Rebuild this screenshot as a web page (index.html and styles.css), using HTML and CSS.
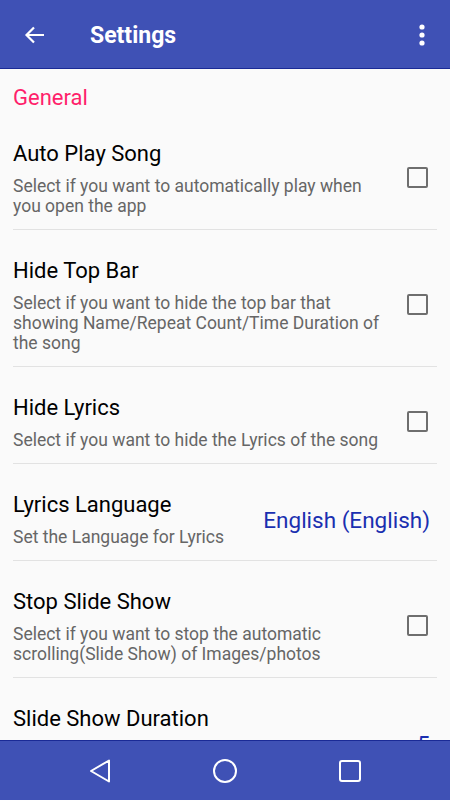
FILE: index.html
```html
<!DOCTYPE html>
<html>
  <head>
    <meta charset="UTF-8">
    <title>Settings</title>
    <link rel="stylesheet" href="styles.css">
  </head>
  <body>
    <header class="toolbar">
      <svg class="toolbar-back" width="24" height="24" viewBox="0 0 24 24">
        <path d="M21 12H4M11 4.5L3.5 12L11 19.5" fill="none" stroke="#fff" stroke-width="2.2"/>
      </svg>
      <h1 class="toolbar-title">Settings</h1>
      <svg class="toolbar-more" width="8" height="24" viewBox="0 0 8 24">
        <circle cx="4" cy="4" r="2.6" fill="#fff"/>
        <circle cx="4" cy="12" r="2.6" fill="#fff"/>
        <circle cx="4" cy="20" r="2.6" fill="#fff"/>
      </svg>
    </header>

    <main class="prefs">
      <div class="category">General</div>

      <div class="pref">
        <div class="pref-text">
          <div class="pref-title">Auto Play Song</div>
          <div class="pref-summary">Select if you want to automatically play when you open the app</div>
        </div>
        <div class="pref-widget"><span class="checkbox"></span></div>
      </div>

      <div class="pref">
        <div class="pref-text">
          <div class="pref-title">Hide Top Bar</div>
          <div class="pref-summary">Select if you want to hide the top bar that showing Name/Repeat Count/Time Duration of the song</div>
        </div>
        <div class="pref-widget"><span class="checkbox"></span></div>
      </div>

      <div class="pref">
        <div class="pref-text">
          <div class="pref-title">Hide Lyrics</div>
          <div class="pref-summary">Select if you want to hide the Lyrics of the song</div>
        </div>
        <div class="pref-widget"><span class="checkbox"></span></div>
      </div>

      <div class="pref">
        <div class="pref-text">
          <div class="pref-title">Lyrics Language</div>
          <div class="pref-summary">Set the Language for Lyrics</div>
        </div>
        <div class="pref-value">English (English)</div>
      </div>

      <div class="pref">
        <div class="pref-text">
          <div class="pref-title">Stop Slide Show</div>
          <div class="pref-summary">Select if you want to stop the automatic scrolling(Slide Show) of Images/photos</div>
        </div>
        <div class="pref-widget"><span class="checkbox"></span></div>
      </div>

      <div class="pref">
        <div class="pref-text">
          <div class="pref-title">Slide Show Duration</div>
          <div class="pref-summary">Set the time (in seconds) each image is shown before moving to the next one</div>
        </div>
        <div class="pref-value">5</div>
      </div>
    </main>

    <nav class="navbar">
      <svg width="24" height="26" viewBox="0 0 24 26">
        <path d="M21 2.5V23.5L3 13Z" fill="none" stroke="#fff" stroke-width="2" stroke-linejoin="round"/>
      </svg>
      <svg width="26" height="26" viewBox="0 0 26 26">
        <circle cx="13" cy="13" r="11" fill="none" stroke="#fff" stroke-width="2"/>
      </svg>
      <svg width="24" height="24" viewBox="0 0 24 24">
        <rect x="2" y="2" width="20" height="20" rx="2" fill="none" stroke="#fff" stroke-width="2"/>
      </svg>
    </nav>
  </body>
</html>
```

FILE: styles.css
```css
body {
  margin: 0;
  height: 800px;
  display: flex;
  flex-direction: column;
  font-family: Roboto, "Noto Sans", sans-serif;
  background-color: #fafafa;
  overflow: hidden;
}

.toolbar {
  height: 68px;
  flex-shrink: 0;
  display: flex;
  align-items: center;
  background-color: #3f51b5;
  border-bottom: 1px solid #1a2a96;
}

.toolbar-back {
  margin: 2px 0 0 23px;
}

.toolbar-title {
  flex: 1;
  margin: 3px 0 0 43px;
  color: #fff;
  font-size: 23px;
  font-weight: bold;
}

.toolbar-more {
  margin: 2px 24px 0 0;
}

.prefs {
  flex: 1;
  overflow: hidden;
}

.category {
  padding: 17px 13px 3px;
  color: #ff1f6b;
  font-size: 22px;
  line-height: 24px;
}

.pref {
  display: flex;
  align-items: center;
  margin: 0 13px;
  padding: 29px 0 13px;
  border-bottom: 1px solid #e2e2e2;
}

.pref-text {
  flex: 1;
}

.pref-title {
  color: #000;
  font-size: 22px;
  line-height: 24px;
}

.pref-summary {
  margin-top: 10px;
  color: #666;
  font-size: 17.5px;
  line-height: 20px;
}

.pref-widget {
  width: 48px;
  display: flex;
  justify-content: flex-end;
  margin-bottom: 4px;
}

.checkbox {
  width: 17px;
  height: 17px;
  margin-right: 9px;
  border: 2.5px solid #6e6e6e;
  border-radius: 2px;
}

.pref-value {
  margin: 0 7px 0 16px;
  color: #1a2fb0;
  font-size: 22.5px;
}

.navbar {
  height: 59px;
  flex-shrink: 0;
  display: flex;
  align-items: center;
  justify-content: center;
  gap: 100px;
  background-color: #3f51b5;
  border-top: 1px solid #1a2a96;
}
```
